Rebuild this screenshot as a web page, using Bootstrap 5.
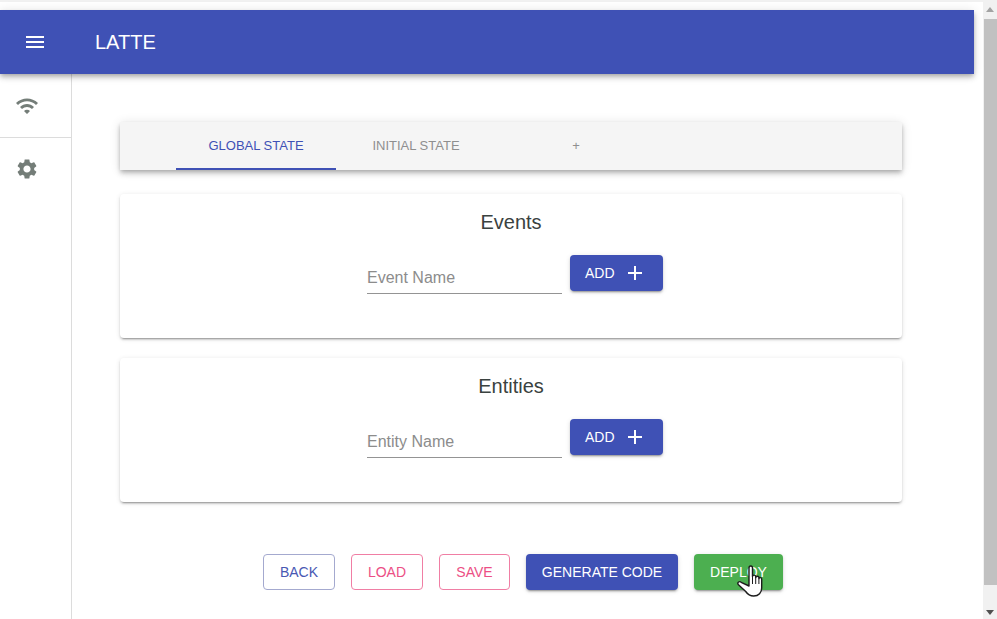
<!DOCTYPE html>
<html lang="en">
<head>
<meta charset="utf-8">
<title>LATTE</title>
<link href="https://cdn.jsdelivr.net/npm/bootstrap@5.3.0/dist/css/bootstrap.min.css" rel="stylesheet">
<style>
html,body{height:619px;overflow:hidden;background:#fff;font-family:"Liberation Sans",Arial,sans-serif;}
.shell{height:619px;}
.top-strip{height:2px;background:#f1f1f1;}
.page-col{width:983px;padding-top:8px;}
.page-inner{width:974px;}
.app-bar{height:64px;background:#3f51b5;color:#fff;box-shadow:0 2px 4px -1px rgba(0,0,0,.2),0 4px 5px 0 rgba(0,0,0,.14),0 1px 10px 0 rgba(0,0,0,.12);position:relative;z-index:2;}
.menu-slot{width:70px;}
.app-title{font-size:20px;line-height:24px;margin-left:25px;font-weight:400;}
.below{height:545px;}
.side-rail{width:72px;border-right:1px solid #dcdcdc;flex:none;padding-right:17px;}
.rail-cell{height:64px;}
.rail-cell-b{height:61px;}
.rail-line{border-bottom:1px solid #dcdcdc;margin-right:-17px;padding-right:17px;}
.content-area{padding:48px 72px 0 48px;}
.tab-strip{height:48px;background:#f5f5f5;box-shadow:0 2px 4px -1px rgba(0,0,0,.2),0 4px 5px 0 rgba(0,0,0,.14),0 1px 10px 0 rgba(0,0,0,.12);padding-left:56px;}
.tab-one,.tab-two,.tab-three{height:48px;font-size:13px;line-height:48px;text-align:center;width:160px;}
.tab-one{color:#3f51b5;border-bottom:2px solid #3f51b5;}
.tab-two,.tab-three{color:#8f8f8f;}
.form-panel{height:144px;margin-top:24px;background:#fff;border-radius:4px;box-shadow:0 3px 1px -2px rgba(0,0,0,.2),0 2px 2px 0 rgba(0,0,0,.14),0 1px 5px 0 rgba(0,0,0,.12);}
.form-panel+.form-panel{margin-top:20px;}
.panel-title{font-size:20px;line-height:24px;color:#3a4240;padding-top:16px;text-align:center;margin:0;font-weight:400;}
.field-row{padding-top:21px;padding-left:247px;}
.name-field{width:195px;height:39px;border-bottom:1px solid #949494;margin-right:8px;font-size:16px;line-height:19px;color:#8c8c8c;padding-top:13px;}
.solid-btn{height:36px;border:0;border-radius:4px;color:#fff;font-size:14px;line-height:36px;padding:0 16px;box-shadow:0 3px 1px -2px rgba(0,0,0,.2),0 2px 2px 0 rgba(0,0,0,.14),0 1px 5px 0 rgba(0,0,0,.12);}
.solid-indigo{background:#3f51b5;}
.solid-green{background:#4caf50;}
.add-btn{width:93px;padding:0 0 0 15px;}
.plus-icon{margin-left:13px;}
.action-row{padding-top:52px;padding-left:143px;gap:16px;}
.line-btn{height:36px;background:#fff;border-radius:4px;font-size:14px;line-height:34px;padding:0;text-align:center;}
.line-indigo{color:#4858b3;border:1px solid #a4a9cf;width:72px;}
.line-pink{color:#ec4f85;border:1px solid #f07ea4;width:72px;}
.line-save{width:71px;}
.gen-btn{width:152px;padding:0;}
.deploy-btn{width:89px;padding:0;position:relative;}
.hand-cursor{position:absolute;left:43px;top:11px;z-index:3;}
.scroll-col{width:14px;margin-top:-2px;background:#f1f1f1;flex:none;}
.scroll-arrow{height:19px;}
.scroll-thumb{height:566px;background:#c1c1c1;margin:0 0 0 1px;}
</style>
</head>
<body>
<div class="shell d-flex flex-column">
<div class="top-strip"></div>
<div class="d-flex flex-grow-1">
<div class="page-col flex-none">
<div class="page-inner">
<header class="app-bar d-flex align-items-center">
<div class="menu-slot d-flex justify-content-center">
<svg width="18" height="12" viewBox="0 0 18 12" aria-hidden="true"><path fill="#fff" d="M0 12h18v-2H0zM0 7h18V5H0zM0 0v2h18V0z"/></svg>
</div>
<div class="app-title">LATTE</div>
</header>
<div class="below d-flex">
<nav class="side-rail">
<div class="rail-cell rail-line d-flex justify-content-center align-items-center">
<svg width="24" height="24" viewBox="0 0 24 24" aria-hidden="true"><path fill="#747d78" d="M1 9l2 2c4.97-4.97 13.03-4.97 18 0l2-2C16.93 2.93 7.08 2.93 1 9zm8 8l3 3 3-3c-1.65-1.66-4.34-1.66-6 0zm-4-4l2 2c2.76-2.76 7.24-2.76 10 0l2-2C15.14 9.14 8.87 9.14 5 13z"/></svg>
</div>
<div class="rail-cell-b d-flex justify-content-center align-items-center">
<svg width="24" height="24" viewBox="0 0 24 24" aria-hidden="true"><path fill="#747d78" d="M19.14 12.94c.04-.3.06-.61.06-.94 0-.32-.02-.64-.07-.94l2.03-1.58c.18-.14.23-.41.12-.61l-1.92-3.32c-.12-.22-.37-.29-.59-.22l-2.39.96c-.5-.38-1.03-.7-1.62-.94l-.36-2.54c-.04-.24-.24-.41-.48-.41h-3.84c-.24 0-.43.17-.47.41l-.36 2.54c-.59.24-1.13.57-1.62.94l-2.39-.96c-.22-.08-.47 0-.59.22L2.74 8.87c-.12.21-.08.47.12.61l2.03 1.58c-.05.3-.09.63-.09.94s.02.64.07.94l-2.03 1.58c-.18.14-.23.41-.12.61l1.92 3.32c.12.22.37.29.59.22l2.39-.96c.5.38 1.03.7 1.62.94l.36 2.54c.05.24.24.41.48.41h3.84c.24 0 .44-.17.47-.41l.36-2.54c.59-.24 1.13-.56 1.62-.94l2.39.96c.22.08.47 0 .59-.22l1.92-3.32c.12-.22.07-.47-.12-.61l-2.01-1.58zM12 15.6c-1.98 0-3.6-1.62-3.6-3.6s1.62-3.6 3.6-3.6 3.6 1.62 3.6 3.6-1.62 3.6-3.6 3.6z"/></svg>
</div>
</nav>
<main class="content-area flex-grow-1">
<div class="tab-strip d-flex">
<div class="tab-one">GLOBAL STATE</div>
<div class="tab-two">INITIAL STATE</div>
<div class="tab-three">+</div>
</div>
<section class="form-panel">
<h2 class="panel-title">Events</h2>
<div class="field-row d-flex">
<div class="name-field">Event Name</div>
<button type="button" class="solid-btn solid-indigo add-btn d-flex align-items-center">ADD<svg class="plus-icon" width="14" height="14" viewBox="0 0 14 14" aria-hidden="true"><path fill="#fff" d="M6 0h2v6h6v2H8v6H6V8H0V6h6z"/></svg></button>
</div>
</section>
<section class="form-panel">
<h2 class="panel-title">Entities</h2>
<div class="field-row d-flex">
<div class="name-field">Entity Name</div>
<button type="button" class="solid-btn solid-indigo add-btn d-flex align-items-center">ADD<svg class="plus-icon" width="14" height="14" viewBox="0 0 14 14" aria-hidden="true"><path fill="#fff" d="M6 0h2v6h6v2H8v6H6V8H0V6h6z"/></svg></button>
</div>
</section>
<div class="action-row d-flex">
<button type="button" class="line-btn line-indigo">BACK</button>
<button type="button" class="line-btn line-pink">LOAD</button>
<button type="button" class="line-btn line-pink line-save">SAVE</button>
<button type="button" class="solid-btn solid-indigo gen-btn">GENERATE CODE</button>
<button type="button" class="solid-btn solid-green deploy-btn">DEPLOY
<svg class="hand-cursor" width="26" height="32" viewBox="0 0 26 32" aria-hidden="true"><path fill="#fff" stroke="#1c1c1c" stroke-width="1.4" stroke-linejoin="round" d="M12 3c0-2.600 3.500-2.600 3.500 0v8.500c.3-1.800 3-1.800 3.200 0v1c.3-1.600 3-1.600 3.200 0v1c.3-1.300 2.800-1.300 2.800.5V23c0 4.500-3 8-8 8-4 0-6-1.500-8-4.500L1.200 19.500c-1.200-2 1.300-3.800 3-2.200L12 21z"/><path stroke="#1c1c1c" stroke-width="1" fill="none" d="M15.500 11.500V19M18.700 12.500V19M21.900 13.500V19"/></svg>
</button>
</div>
</main>
</div>
</div>
</div>
<aside class="scroll-col d-flex flex-column">
<div class="scroll-arrow d-flex justify-content-center align-items-center"><svg width="8" height="5" viewBox="0 0 8 5" aria-hidden="true"><path fill="#a3a3a3" d="M4 0l4 5H0z"/></svg></div>
<div class="scroll-thumb"></div>
<div class="flex-grow-1 d-flex justify-content-center align-items-end"><svg class="mb-1" width="8" height="5" viewBox="0 0 8 5" aria-hidden="true"><path fill="#505050" d="M0 0h8L4 5z"/></svg></div>
</aside>
</div>
</div>
<script src="https://cdn.jsdelivr.net/npm/bootstrap@5.3.0/dist/js/bootstrap.bundle.min.js"></script>
</body>
</html>
